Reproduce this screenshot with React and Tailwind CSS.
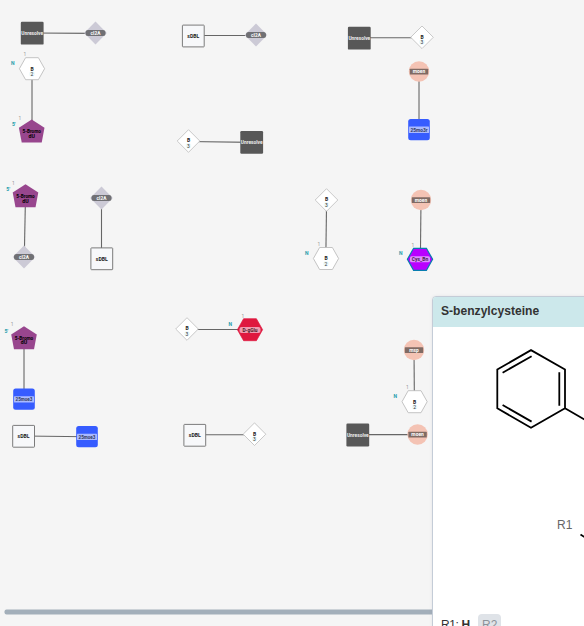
const nodes = [
  ['unresolved', 32.2, 33.2], ['chem', 95.5, 33], ['hex', 32, 68.7], ['pentagon', 31.7, 131.5, 13.5, 125, 20, 119.5],
  ['square', 193.3, 36], ['chem', 256, 35], ['diamond', 188.5, 141], ['unresolved', 251.7, 142.4],
  ['unresolved', 359.3, 38.2], ['diamond', 422, 37.3], ['circle', 419, 71.5, 'moen'], ['blue', 419, 129.6, '25mo3r'],
  ['pentagon', 25.5, 196.3, 7.8, 190, 13.5, 184.5], ['chem', 24, 257], ['chem', 101.5, 198], ['square', 101.8, 258.8],
  ['diamond', 326.5, 200], ['hex', 326, 258.5], ['circle', 421, 200, 'moen'], ['cys', 420, 259.3],
  ['pentagon', 24, 338.2, 6, 332, 12.3, 326], ['blue', 24, 399.2, '25moe3'], ['square', 23.6, 436.3], ['blue', 87, 436.7, '25moe3'],
  ['diamond', 187, 329], ['dglu', 250, 329.7], ['square', 194.8, 435.3], ['diamond', 254.5, 434.2],
  ['circle', 414, 350, 'msp'], ['hex', 414.6, 401.7], ['unresolved', 357.8, 435], ['circle', 417.6, 434.5, 'moen'],
];

const bonds = [
  [32, 33, 95, 33.4], [32, 69, 32, 131], [193, 35.5, 256, 35.5], [188, 141.5, 252, 142.4],
  [359, 37.7, 422, 37.7], [419, 71, 419, 129], [25.5, 196, 24.3, 257], [101.5, 198, 101.5, 259],
  [326.6, 200, 325.8, 259], [421, 200, 420.4, 259], [24, 338, 24, 399], [24, 436, 87, 436.8],
  [187, 329.5, 250, 329.5], [195, 434.7, 254, 434.7], [414, 350, 414.4, 402], [358, 434.6, 417, 434.6],
];

function Text({ y = 0, size = 5.2, fill = '#222', w, children }) {
  return <text x="0" y={y} fontSize={size} fill={fill} fontWeight="700" textAnchor="middle" textLength={w} lengthAdjust="spacingAndGlyphs">{children}</text>;
}

function Terminal({ x = -19.3, y = -4, nx = -7.2, ny = -12.5, label = 'N' }) {
  return (
    <>
      <text x={x} y={y} fontSize="5" fontWeight="700" fill="#199ba9" textAnchor="middle">{label}</text>
      <text x={nx} y={ny} fontSize="5" fill="#999" textAnchor="middle">1</text>
    </>
  );
}

function BLabel({ number, y = 0 }) {
  return (
    <>
      <circle cy={y + 4.8} r="2.8" fill="#edf9fa" />
      <Text y={y + 1.4} size={5}>B</Text>
      <text y={y + 6.8} fontSize="5" fill="#333" textAnchor="middle">{number}</text>
    </>
  );
}

const hexPoints = '-12.6,0 -6.4,-11 6.4,-11 12.6,0 6.4,11 -6.4,11';

function Monomer({ data }) {
  const [type, x, y, a, b, c, d] = data;
  return (
    <g transform={`translate(${x} ${y})`}>
      {type === 'unresolved' && <><rect x="-11.4" y="-11.4" width="22.8" height="22.8" rx="1.2" fill="#585858" /><Text y={1.8} fill="#eee" w={21.8}>Unresolve</Text></>}
      {type === 'square' && <><rect x="-10.9" y="-10.9" width="21.8" height="21.8" rx=".6" fill="#f7f8fa" stroke="#7b7b7b" strokeWidth="1" /><Text y={1.8} w={12}>sDBL</Text></>}
      {type === 'chem' && <><path d="M0-11.5 11.3 0 0 11.5-11.3 0Z" fill="#cccad6" /><rect x="-10" y="-3" width="20" height="6" rx="2.5" fill="#707074" /><Text y={1.7} fill="#fff" w={9.8}>cI2A</Text></>}
      {type === 'diamond' && <><path d="M0-11.3 11.3 0 0 11.3-11.3 0Z" fill="#fff" stroke="#bdbdbd" strokeWidth=".8" /><BLabel number="3" /></>}
      {type === 'hex' && <><polygon points={hexPoints} fill="#fff" stroke="#bdbdbd" strokeWidth=".9" /><BLabel number="2" y={0.5} /><Terminal /></>}
      {type === 'pentagon' && <><path d="M0-12 12.8-3.8 10 11H-10L-12.8-3.8Z" fill="#98468e" /><Text y={1.4} fill="#000" w={18.5}>5-Bromo</Text><Text y={6.3} fill="#000" w={6.4}>dU</Text><Terminal label="5'" x={a - x + 0.3} y={b - y + 1.2} nx={c - x - 0.2} ny={d - y + 0.3} /></>}
      {type === 'circle' && <><circle r="10.2" fill="#f4c3b4" /><rect x="-9.2" y="-2.8" width="18.4" height="5.8" rx=".6" fill="#806b64" /><Text y={1.6} size={5} fill="#fff" w={a === 'msp' ? 9.6 : 12.5}>{a}</Text></>}
      {type === 'blue' && <><rect x="-10.8" y="-10.6" width="21.6" height="21.2" rx="2.5" fill="#365cff" /><rect x="-10" y="-3" width="20" height="6.4" rx=".6" fill="#aabaff" /><Text y={1.9} fill="#333a5c" w={17}>{a}</Text></>}
      {type === 'cys' && <><polygon points={hexPoints} fill="#b900ff" stroke="#087db0" strokeWidth="1.2" /><rect x="-10" y="-3" width="20" height="6" rx="1.5" fill="#e08cff" /><Text y={1.7} fill="#46204f" w={16.5}>Cys_Bn</Text><Terminal /></>}
      {type === 'dglu' && <><polygon points={hexPoints} fill="#df183f" stroke="#df183f" strokeWidth=".7" /><rect x="-10.5" y="-2.8" width="21" height="6.2" rx="2" fill="#f09aaf" /><Text y={2} fill="#4a2029" w={15}>D-gGlu</Text><Terminal x={-19.7} y={-3.8} nx={-7} ny={-11.7} /></>}
    </g>
  );
}

function Canvas() {
  return (
    <svg className="block h-full w-full font-['Roboto','Liberation_Sans',sans-serif]" viewBox="0 0 584 626">
      {bonds.map(([x1, y1, x2, y2], i) => <line key={i} x1={x1} y1={y1} x2={x2} y2={y2} stroke="#666" strokeWidth="1.1" />)}
      {nodes.map((data, i) => <Monomer key={i} data={data} />)}
      <rect x="4.5" y="609.5" width="480" height="5" rx="2" fill="#a3afba" />
    </svg>
  );
}

export default function App() {
  return (
    <main className="relative h-[626px] w-[584px] overflow-hidden bg-[#f5f5f5] font-['Liberation_Sans',sans-serif]">
      <Canvas />
      <aside className="absolute left-[432px] top-[296px] flex h-[350px] w-[260px] flex-col overflow-hidden rounded border border-[#c4ccd7] bg-white shadow-[0_0_3px_rgba(100,115,130,0.12)]">
        <header className="flex h-[30px] shrink-0 items-center bg-[#cce8eb] pl-2 text-[12.1px] font-bold leading-4 text-[#333]">
          <span className="relative -top-px">S-benzylcysteine</span>
        </header>
        <div className="h-[287px] shrink-0">
          <svg className="block" width="260" height="287" viewBox="433 327 260 287">
            <g fill="none" stroke="#000" strokeWidth="1.8">
              <path d="M531 350.1 565 369.5V408.3L531 427.8 497.3 408.3V369.5Z" />
              <path d="M531.6 356.3 502.6 372.7M559.3 372.3V405.7M531.6 421.6 502.6 405M565 408.3 600 428.5M580.5 534.5 590 540.5" />
            </g>
            <text x="557" y="529" fontSize="12" fill="#666">R1</text>
          </svg>
        </div>
        <footer className="flex shrink-0 items-center gap-2 pl-2 text-[12px] leading-[14px] text-[#333]">
          <span className="w-[29px] whitespace-nowrap tracking-[-0.4px]">R1: <b>H</b></span>
          <span className="rounded bg-[#dfe3e8] px-1 py-1 text-[#8b9299]">R2</span>
        </footer>
      </aside>
    </main>
  );
}
